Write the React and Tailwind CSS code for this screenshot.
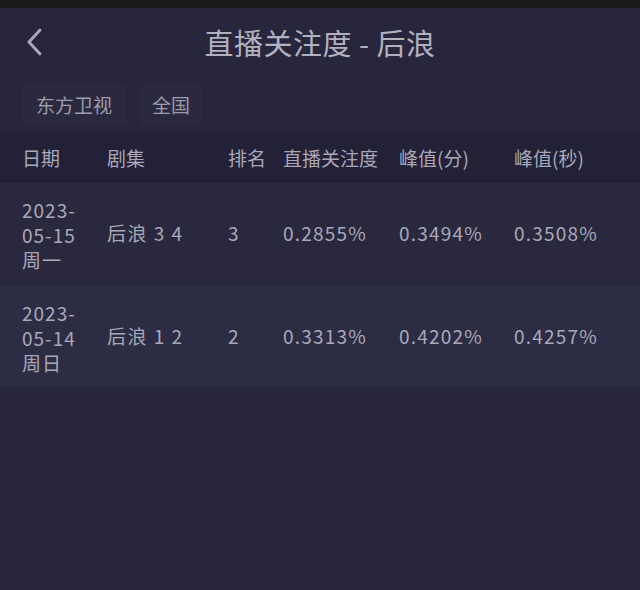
import React from "react";

const font = { fontFamily: '"Noto Sans CJK SC", "Noto Sans", sans-serif' };

const rows = [
  { y: "2023-", md: "05-15", wd: "周一", name: "后浪 3 4", rank: "3", a: "0.2855%", b: "0.3494%", c: "0.3508%", bg: "bg-[#29283f]" },
  { y: "2023-", md: "05-14", wd: "周日", name: "后浪 1 2", rank: "2", a: "0.3313%", b: "0.4202%", c: "0.4257%", bg: "bg-[#2d2c45]" },
];

const cols = "grid grid-cols-[85px_121px_55px_116px_115px_1fr] pl-[22px] items-center";

export default function App() {
  return (
    <div className="w-[640px] h-[590px] bg-[#28263d] text-[#a9a8b8] overflow-hidden flex flex-col" style={font}>
      <div className="h-[8px] bg-[#1b1b1c]" />
      <div className="relative h-[70px] flex items-center justify-center">
        <svg className="absolute left-[24px] top-[19px]" width="22" height="30" viewBox="0 0 22 30" fill="none">
          <path d="M16 3 L5 15 L16 27" stroke="#a9a8b8" strokeWidth="3" strokeLinecap="round" strokeLinejoin="round" />
        </svg>
        <div className="text-[29px] leading-none text-[#b2b1bf] tracking-[0.5px] -mt-[2px]">直播关注度 - 后浪</div>
      </div>
      <div className="flex gap-[14px] pl-[22px] h-[46px] items-start pt-[7px]">
        <div className="h-[40px] px-[14px] flex items-center bg-[#2a293f] text-[19px] text-[#9d9cad]">东方卫视</div>
        <div className="h-[40px] px-[12px] flex items-center bg-[#2a293f] text-[19px] text-[#9d9cad]">全国</div>
      </div>
      <div className={`${cols} h-[50px] bg-[#232137] text-[19px] mt-[9px]`}>
        <div>日期</div>
        <div>剧集</div>
        <div>排名</div>
        <div>直播关注度</div>
        <div>峰值(分)</div>
        <div>峰值(秒)</div>
      </div>
      {rows.map((r, i) => (
        <div key={i} className={`${cols} h-[100px] ${r.bg} text-[19px] ${i === 1 ? "mt-[3px]" : ""}`}>
          <div className="flex flex-col leading-[25px] tracking-[1px] pt-[2px]">
            <span>{r.y}</span>
            <span>{r.md}</span>
            <span>{r.wd}</span>
          </div>
          <div className="tracking-[1.5px]">{r.name}</div>
          <div>{r.rank}</div>
          <div className="tracking-[1.2px]">{r.a}</div>
          <div className="tracking-[1.2px]">{r.b}</div>
          <div className="tracking-[1.2px]">{r.c}</div>
        </div>
      ))}
    </div>
  );
}
